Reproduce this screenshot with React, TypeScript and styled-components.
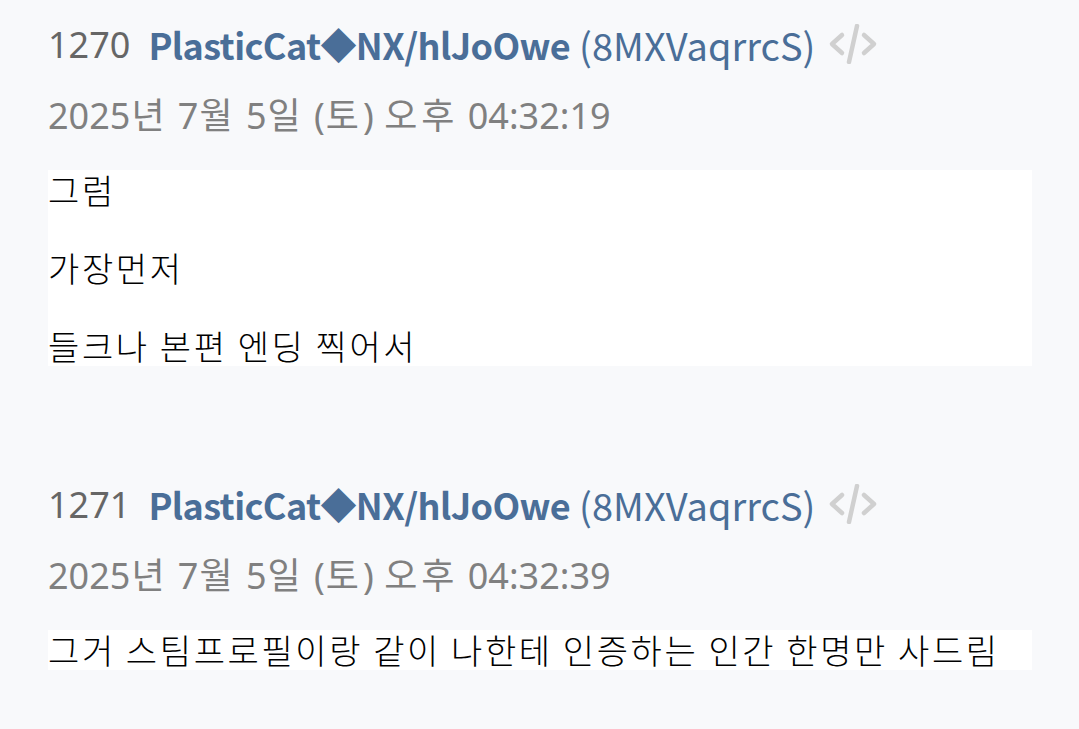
import React from "react";
import styled, { createGlobalStyle } from "styled-components";

const GlobalStyle = createGlobalStyle`
  html, body {
    margin: 0;
    padding: 0;
    background: #f8f9fb;
  }
  body {
    font-family: "Noto Sans CJK KR", "Noto Sans", sans-serif;
  }
`;

const Page = styled.div`
  padding: 20px 47px 0 48px;
  min-height: 729px;
  box-sizing: border-box;
  background: #f8f9fb;
`;

const Post = styled.section`
  margin-bottom: 114px;
`;

const Header = styled.div`
  display: flex;
  align-items: center;
  height: 48px;
  font-size: 36px;
  white-space: nowrap;
`;

const Num = styled.span`
  font-family: "Noto Sans", "Noto Sans CJK KR", sans-serif;
  color: #666;
  margin-right: 18px;
`;

const Name = styled.span`
  color: #4a6e98;
  font-weight: 700;
  letter-spacing: -0.6px;
  margin-right: 9px;
`;

const Id = styled.span`
  color: #4a6e98;
  font-size: 38px;
  margin-right: 13px;
`;

const DateLine = styled.div`
  margin-top: 24px;
  height: 48px;
  line-height: 48px;
  font-family: "Noto Sans", "Noto Sans CJK KR", sans-serif;
  font-size: 36px;
  color: #808080;
  white-space: nowrap;
`;

// hangul in the date runs a little wider than the digits
const Hangul = styled.span`
  letter-spacing: 4px;
  margin-left: 1px;
`;

const Body = styled.div`
  margin-top: 30px;
  background: #fff;
  color: #000;
  font-size: 34px;
  font-weight: 300;
  letter-spacing: 2.6px;

  p {
    margin: 38px 0;
    line-height: 40px;
    white-space: nowrap;
  }
  p:first-child {
    margin-top: 0;
  }
  p:last-child {
    margin-bottom: 0;
  }
`;

const CodeIcon = () => (
  <svg width="50" height="40" viewBox="0 0 50 40" fill="none">
    <g stroke="#d0d0d0" strokeWidth="4.5" strokeLinecap="round" strokeLinejoin="round">
      <path d="M14 11 L4 20 L14 29" />
      <path d="M29 2 L21 38" />
      <path d="M36 11 L46 20 L36 29" />
    </g>
  </svg>
);

const splitHangul = (text: string) =>
  text.split(/([가-힣]+)/).map((part, i) =>
    /[가-힣]/.test(part) ? <Hangul key={i}>{part}</Hangul> : part
  );

type PostData = {
  num: number;
  name: string;
  id: string;
  date: string;
  lines: string[];
};

const posts: PostData[] = [
  {
    num: 1270,
    name: "PlasticCat◆NX/hlJoOwe",
    id: "(8MXVaqrrcS)",
    date: "2025년 7월 5일 (토) 오후 04:32:19",
    lines: ["그럼", "가장먼저", "들크나 본편 엔딩 찍어서"],
  },
  {
    num: 1271,
    name: "PlasticCat◆NX/hlJoOwe",
    id: "(8MXVaqrrcS)",
    date: "2025년 7월 5일 (토) 오후 04:32:39",
    lines: ["그거 스팀프로필이랑 같이 나한테 인증하는 인간 한명만 사드림"],
  },
];

const App = () => {
  return (
    <>
      <GlobalStyle />
      <Page>
        {posts.map((post) => (
          <Post key={post.num}>
            <Header>
              <Num>{post.num}</Num>
              <Name>{post.name}</Name>
              <Id>{post.id}</Id>
              <CodeIcon />
            </Header>
            <DateLine>{splitHangul(post.date)}</DateLine>
            <Body>
              {post.lines.map((line, i) => (
                <p key={i}>{line}</p>
              ))}
            </Body>
          </Post>
        ))}
      </Page>
    </>
  );
};

export default App;
